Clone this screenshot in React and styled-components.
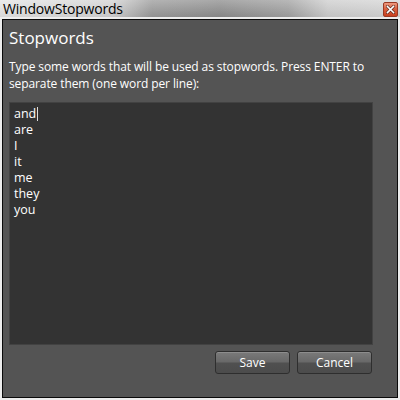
import React from 'react'
import styled, { createGlobalStyle } from 'styled-components'

const GlobalStyle = createGlobalStyle`
  html, body {
    margin: 0;
    padding: 0;
    width: 400px;
    height: 400px;
    overflow: hidden;
    background: #555;
  }
  * { box-sizing: border-box; }
`

const Window = styled.div`
  width: 400px;
  height: 400px;
  display: flex;
  flex-direction: column;
  font-family: "Open Sans", "Noto Sans", sans-serif;
`

const TitleBar = styled.div`
  height: 17px;
  display: flex;
  align-items: center;
  justify-content: space-between;
  padding: 0 2px 0 3px;
  background:
    linear-gradient(to bottom, rgba(255,255,255,0.25), rgba(0,0,0,0.05)),
    linear-gradient(to right, #e4e4e4 0%, #d2d2d2 28%, #9a9a9a 38%, #8c8c8c 55%, #a0a0a0 72%, #cdcdcd 82%, #d6d6d6 100%);
`

const TitleText = styled.span`
  font-size: 14px;
  line-height: 17px;
  color: #000;
  letter-spacing: -0.2px;
`

const CloseButton = styled.div`
  width: 15px;
  height: 15px;
  margin-top: 1px;
  border-radius: 2px;
  border: 1px solid #9a3a24;
  background: linear-gradient(to bottom, #ee9a80 0%, #d9603f 45%, #c8401f 100%);
  display: flex;
  align-items: center;
  justify-content: center;
`

const Frame = styled.div`
  flex: 1;
  border: 2px solid #ececec;
  display: flex;
`

const Body = styled.div`
  flex: 1;
  border: 1px solid #0a0a0a;
  background: #545454;
  padding: 7px 25px 23px 6px;
  display: flex;
  flex-direction: column;
`

const Heading = styled.h1`
  margin: 0 0 9px;
  font-size: 17px;
  line-height: 22px;
  font-weight: normal;
  color: #fff;
`

const Description = styled.p`
  margin: 0 0 10px;
  font-size: 12px;
  line-height: 17px;
  color: #fff;
  letter-spacing: -0.1px;
`

const WordBox = styled.div`
  flex: 1;
  margin-right: -1px;
  background: #333;
  border: 1px solid #424242;
  padding: 3px 4px;
  display: flex;
  flex-direction: column;
`

const Word = styled.div`
  font-size: 12.5px;
  line-height: 16px;
  color: #fff;
  display: flex;
  align-items: center;
`

const Caret = styled.span`
  width: 1px;
  height: 14px;
  margin-left: 1px;
  background: #ddd;
`

const ButtonRow = styled.div`
  display: flex;
  justify-content: flex-end;
  gap: 7px;
  margin-top: 6px;
`

const Button = styled.button`
  width: 75px;
  height: 23px;
  border: 1px solid #2e2e2e;
  border-radius: 3px;
  color: #fff;
  font-family: "Open Sans", "Noto Sans", sans-serif;
  font-size: 12px;
  padding: 0;
  background: linear-gradient(to bottom, #7a7a7a 0%, #686868 48%, #505050 52%, #4c4c4c 100%);
  box-shadow: inset 0 1px 0 rgba(255,255,255,0.15);
`

const words = ['and', 'are', 'I', 'it', 'me', 'they', 'you']

export default function App() {
  return (
    <Window>
      <GlobalStyle />
      <TitleBar>
        <TitleText>WindowStopwords</TitleText>
        <CloseButton>
          <svg width="9" height="9" viewBox="0 0 9 9">
            <path d="M1.5 1.5 L7.5 7.5 M7.5 1.5 L1.5 7.5" stroke="#5a2a1e" strokeWidth="3" strokeLinecap="square" />
            <path d="M1.5 1.5 L7.5 7.5 M7.5 1.5 L1.5 7.5" stroke="#fff" strokeWidth="1.6" strokeLinecap="square" />
          </svg>
        </CloseButton>
      </TitleBar>
      <Frame>
        <Body>
          <Heading>Stopwords</Heading>
          <Description>
            Type some words that will be used as stopwords. Press ENTER to separate them (one word per line):
          </Description>
          <WordBox>
            {words.map((w, i) => (
              <Word key={w}>
                {w}
                {i === 0 && <Caret />}
              </Word>
            ))}
          </WordBox>
          <ButtonRow>
            <Button>Save</Button>
            <Button>Cancel</Button>
          </ButtonRow>
        </Body>
      </Frame>
    </Window>
  )
}
